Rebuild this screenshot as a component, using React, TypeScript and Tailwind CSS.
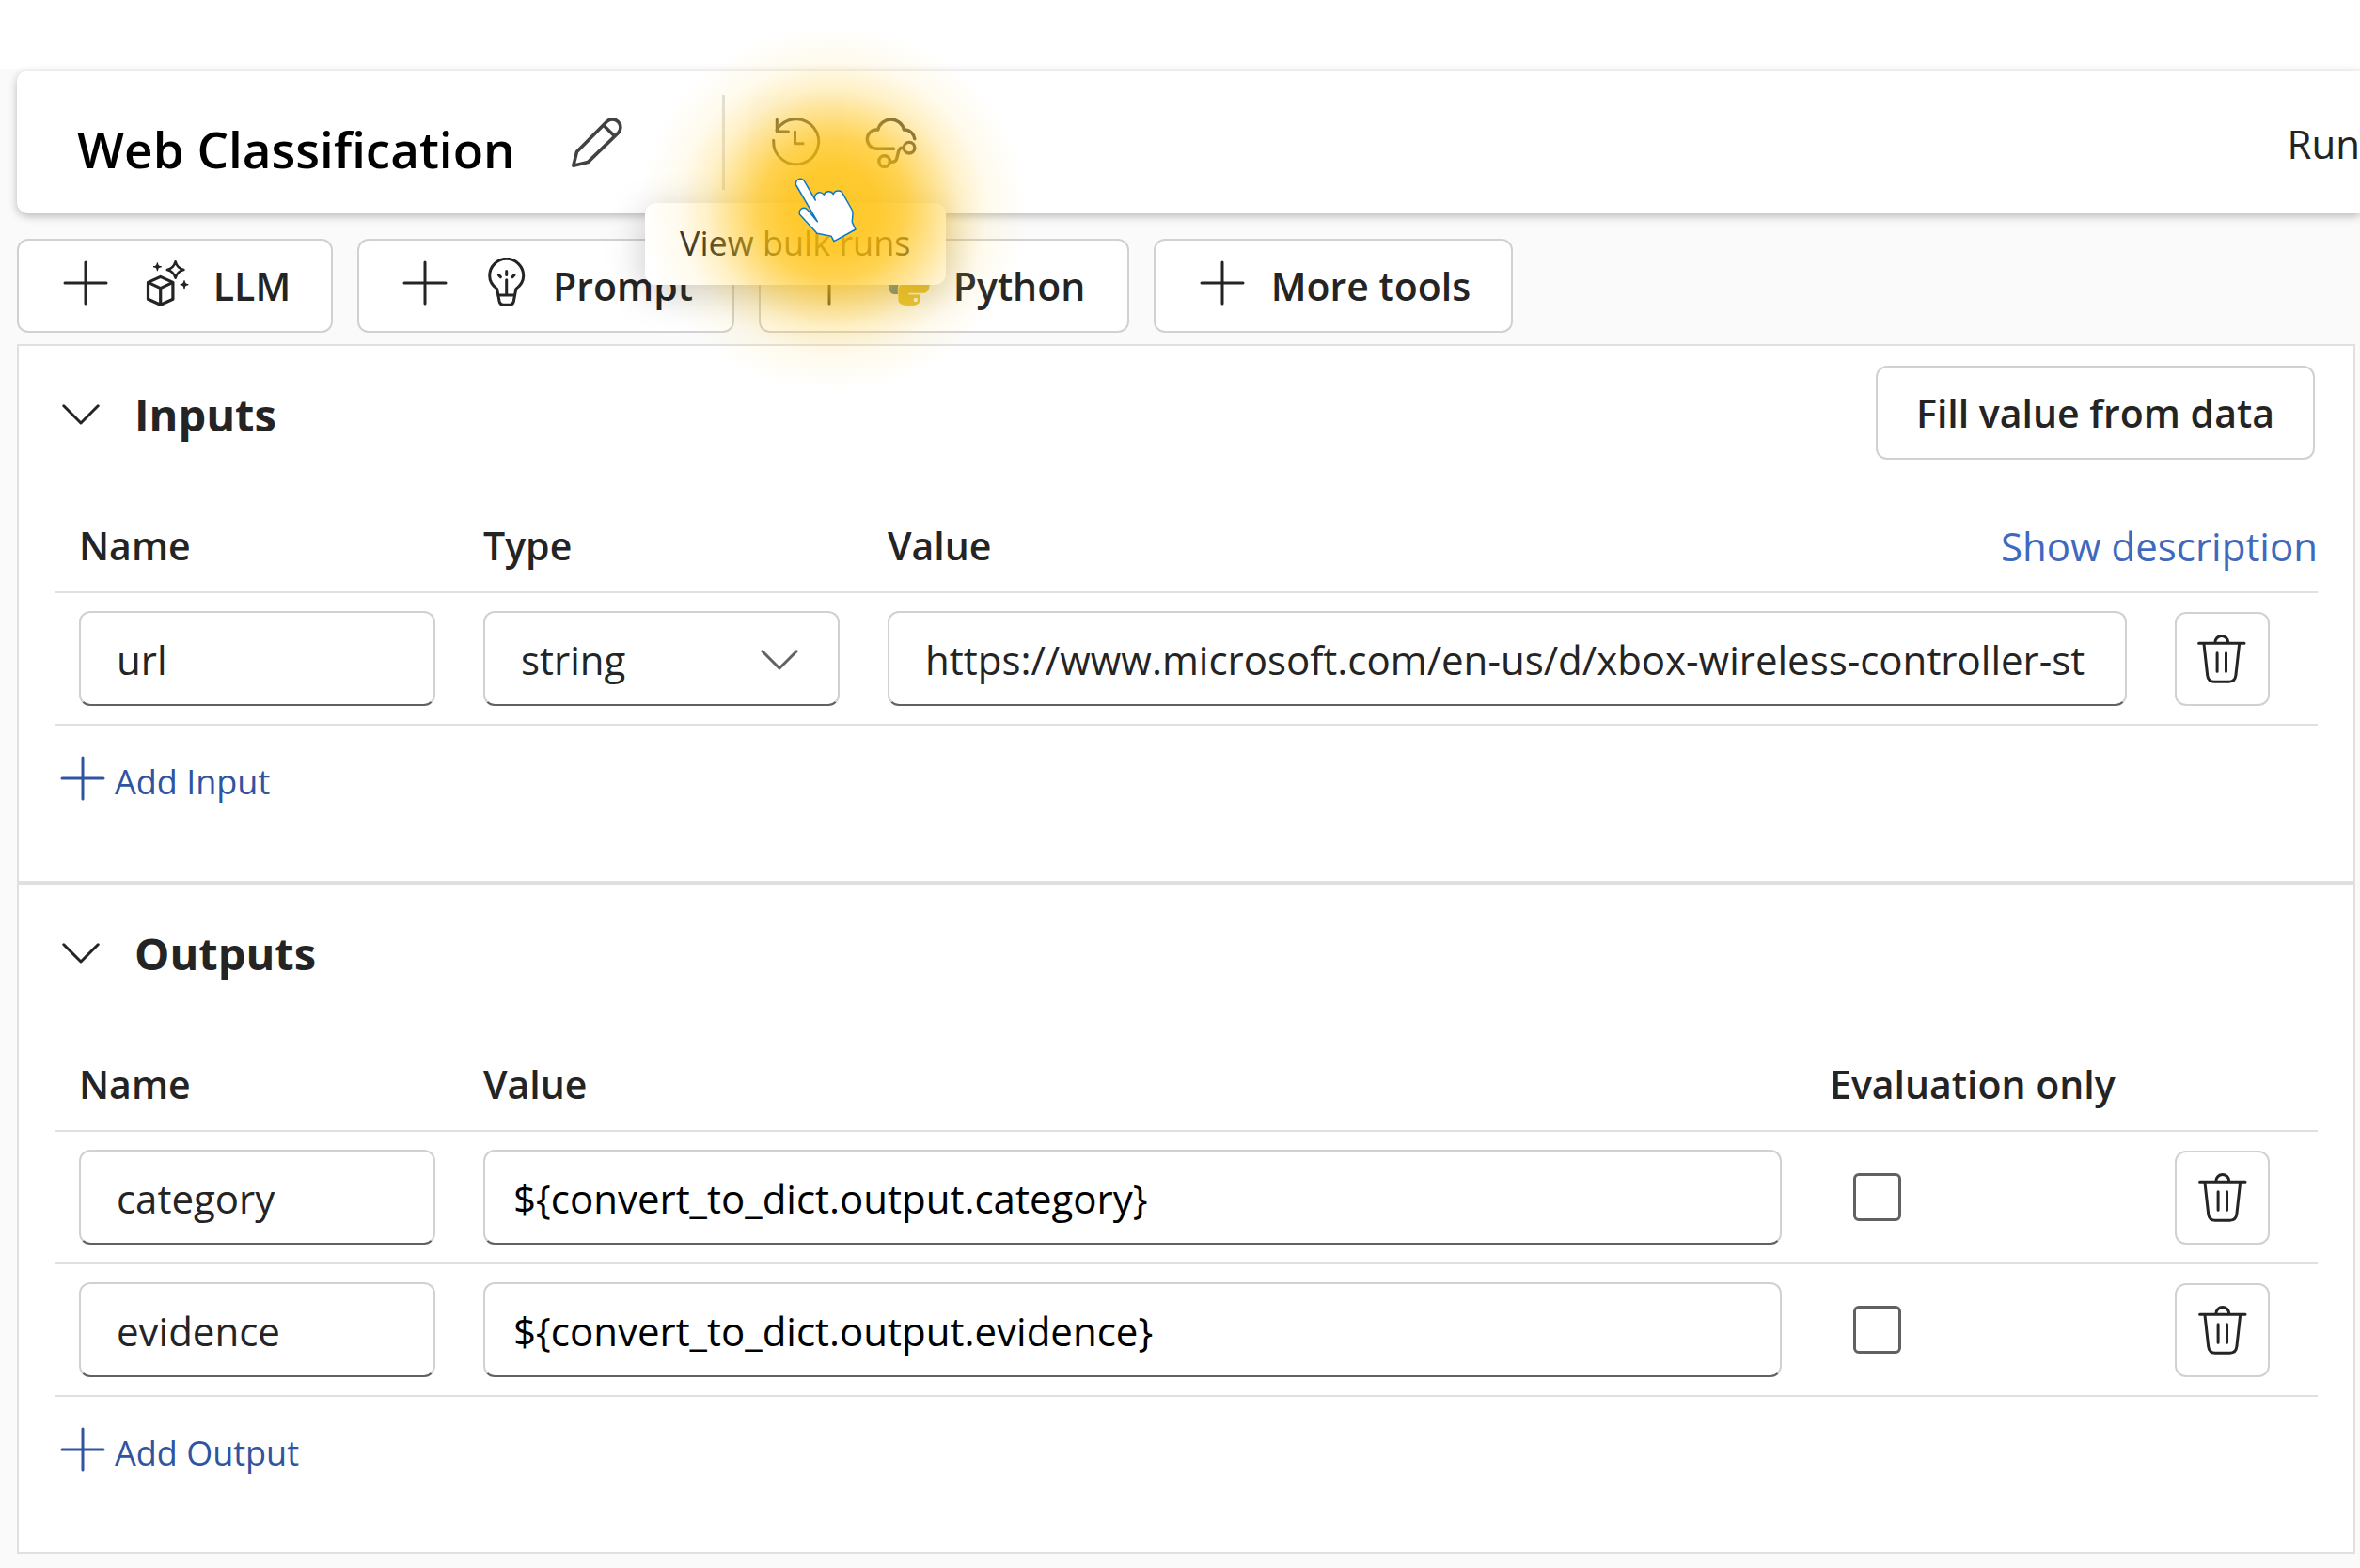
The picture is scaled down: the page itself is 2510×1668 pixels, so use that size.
import type { ReactNode } from "react";

const INK = "#242424";

function PlusIcon() {
  return (
    <svg width="48" height="48" viewBox="0 0 48 48" fill="none" stroke="currentColor" strokeWidth="3" strokeLinecap="round" aria-hidden="true">
      <path d="M24 2v44M2 24h44" />
    </svg>
  );
}

function PencilIcon() {
  return (
    <svg width="56" height="56" viewBox="0 0 56 56" fill="none" stroke="#424242" strokeWidth="3.6" strokeLinejoin="round" aria-hidden="true">
      <path d="M2.8 52.2 6.5 37.6 38.2 5.4a8.6 8.6 0 0 1 12.2 12.2L18.2 48.6Z" />
      <path d="m34.6 9 12.2 12" />
    </svg>
  );
}

function HistoryIcon() {
  return (
    <svg width="56" height="56" viewBox="0 0 56 56" fill="none" stroke="#424242" strokeWidth="3" strokeLinecap="round" strokeLinejoin="round" aria-hidden="true">
      <path d="M3.7 25.3A24 24 0 1 0 7 14.5" />
      <path d="M7.3 3.2V16h12.2" />
      <path d="M26.5 16v12.7h8.6" />
    </svg>
  );
}

function CloudFlowIcon() {
  return (
    <svg width="60" height="60" viewBox="0 0 60 60" fill="none" stroke="#424242" strokeWidth="3.4" strokeLinecap="round" strokeLinejoin="round" aria-hidden="true">
      <path d="M33.6 36.2H15.4a10.1 10.1 0 0 1 0-20.2h1.4a14.2 14.2 0 0 1 27.6 0h1.4c5 .4 9.2 4.4 10 9.8" />
      <circle cx="50" cy="35.2" r="5.8" />
      <circle cx="23.6" cy="49.6" r="5.8" />
      <path d="M44.2 35.2h-1.4c-2.6 0-3.6 1.4-4.2 4l-1.8 7.2c-.7 2.6-1.8 3.8-4.2 3.8h-3" />
    </svg>
  );
}

function CubeSparkleIcon() {
  return (
    <svg width="50" height="54" viewBox="0 0 50 54" fill="none" stroke="currentColor" strokeWidth="3.2" strokeLinejoin="round" aria-hidden="true">
      <path d="m17.7 20.4 13.2 6v17.8l-13.2 6-13.2-6V26.4Z" />
      <path d="m4.5 26.4 13.2 6.2 13.2-6.2M17.7 32.6v17.6" />
      <path strokeWidth="2.6" d="M33.6 4.2c1.2 4.8 3.8 7.6 8.8 8.8-5 1.2-7.6 4-8.8 8.8-1.2-4.8-3.8-7.6-8.8-8.8 5-1.2 7.6-4 8.8-8.8Z" />
      <path fill="currentColor" stroke="none" d="M14.4 5.2q.8 3.8 4.6 4.6-3.8.8-4.6 4.6-.8-3.8-4.6-4.6 3.8-.8 4.6-4.6ZM43 24.1q.8 3.8 4.6 4.6-3.8.8-4.6 4.6-.8-3.8-4.6-4.6 3.8-.8 4.6-4.6Z" />
      <path strokeWidth="1.4" strokeLinecap="round" d="M14.4 6v7.6M10.6 9.8h7.6M43 24.9v7.6M39.2 28.7h7.6" />
    </svg>
  );
}

function BulbIcon() {
  return (
    <svg width="50" height="54" viewBox="0 0 50 54" fill="none" stroke="currentColor" strokeWidth="3" strokeLinecap="round" strokeLinejoin="round" aria-hidden="true">
      <path d="M14.6 33.4C9.400 29.600 6.700 24.600 6.700 19.300a18 18 0 0 1 36 0c0 5.300-2.700 10.300-7.900 14.100L32.300 46.600c-.5 2.300-1.800 3.600-4 3.600h-7.200c-2.200 0-3.500-1.300-4-3.600Z" />
      <path d="M16 39.900h17.400M24.700 23.800v15.600M24.700 14.500v4M16.400 18.600l2 2M33 18.600l-2 2" />
    </svg>
  );
}

function PythonIcon() {
  return (
    <svg width="46" height="50" viewBox="0 0 46 50" aria-hidden="true">
      <path fill="#3c77a9" fillRule="evenodd" d="M22 1C14 1 11.300 3 11.300 7v5.500h12v1.800H7C3 14.300.8 18.500.8 25.500S3 37 7 37h3.800v-6.200c0-4 3-7 7-7h10.800c3.200 0 5.600-2.600 5.600-5.800V7c0-4-4.200-6-12.200-6Zm-6.200 3.800a2.200 2.200 0 1 1 0 4.400 2.200 2.200 0 0 1 0-4.400Z" />
      <path fill="#e8c52e" fillRule="evenodd" transform="rotate(180 22.800 25)" d="M22 1C14 1 11.300 3 11.300 7v5.500h12v1.800H7C3 14.300.8 18.500.8 25.500S3 37 7 37h3.800v-6.200c0-4 3-7 7-7h10.800c3.200 0 5.600-2.600 5.600-5.800V7c0-4-4.200-6-12.200-6Zm-6.200 3.800a2.200 2.200 0 1 1 0 4.400 2.200 2.200 0 0 1 0-4.400Z" />
    </svg>
  );
}

function TrashIcon() {
  return (
    <svg width="52" height="56" viewBox="0 0 52 56" fill="none" stroke={INK} strokeWidth="3" strokeLinecap="round" strokeLinejoin="round" aria-hidden="true">
      <path d="M1.600 11.200h48.400M18.800 10.600a7 7 0 0 1 14 0" />
      <path d="M7 12.200l3.700 33.200c.5 4.400 3.200 6.800 7.300 6.800h15.600c4.100 0 6.800-2.400 7.300-6.800l3.700-33.200" />
      <path d="M21.100 21.800v19.400M30.500 21.800v19.400" />
    </svg>
  );
}

function ChevronIcon({ color = INK }: { color?: string }) {
  return (
    <svg width="40" height="22" viewBox="0 0 40 22" fill="none" stroke={color} strokeWidth="3" strokeLinecap="round" strokeLinejoin="round" aria-hidden="true">
      <path d="m1.800 1.800 18.200 18.200 18.200-18.200" />
    </svg>
  );
}

function HandPointer() {
  return (
    <svg width="68" height="70" viewBox="0 0 68 70" fill="#fff" stroke="#0a78c4" strokeWidth="1.500" strokeLinejoin="round" aria-hidden="true">
      <path d="M2 8.500A4.700 4.700 0 0 1 10.600 3.800L22.300 24a4.500 4.500 0 0 1 9-5.800 5.500 5.500 0 0 1 10-.6 5.500 5.500 0 0 1 10.400.1l9.600 16.800c1.800 4.500-.3 8.500.1 13.200L65 55 42 67.700l-3-5.500-15-3L5.800 39.600a4.600 4.600 0 0 1 8.500-4.900l10 12Z" />
    </svg>
  );
}

function ToolButton({ icon, label, width }: { icon?: ReactNode; label: string; width: string }) {
  return (
    <button className={`flex h-[100px] items-center justify-center rounded-xl border-2 border-[#d1d1d1] bg-white pl-1 text-[41px] font-semibold ${width}`}>
      <span className="pb-1.5">
        <PlusIcon />
      </span>
      {icon && <span className="ml-[38px] pb-1.5">{icon}</span>}
      <span className={icon ? "ml-6 pt-0.5" : "ml-7 pt-0.5"}>{label}</span>
    </button>
  );
}

const field =
  "block h-[101px] w-full rounded-xl border-2 border-[#d1d1d1] border-b-[#616161] bg-white pt-0.5 text-[42px]";
const cell = "border-b-2 border-[#e0e0e0] pt-[19px] pr-[25px] pb-[19px] pl-[26px]";
const head = "h-[102px] border-b-2 border-[#e0e0e0] pt-1 pl-[26px] text-left text-[41px] font-semibold";

function DeleteButton({ name }: { name: string }) {
  return (
    <button aria-label={`Delete ${name}`} className="flex h-[100px] w-[101px] items-center justify-center rounded-xl border-2 border-[#d1d1d1] bg-white">
      <TrashIcon />
    </button>
  );
}

function SectionHeading({ title, children }: { title: string; children?: ReactNode }) {
  return (
    <div className="mb-10 flex h-[100px] items-center">
      <button aria-label={`Collapse ${title}`} className="ml-2 pt-1">
        <ChevronIcon />
      </button>
      <h2 className="ml-[37px] pt-1 text-[47px] font-bold">{title}</h2>
      {children}
    </div>
  );
}

function AddButton({ label }: { label: string }) {
  return (
    <button className="mt-8 ml-1.5 flex h-12 items-center gap-2.5 text-[36px] text-[#30549f]">
      <PlusIcon />
      <span className="pt-2">{label}</span>
    </button>
  );
}

const outputs = [
  { name: "category", value: "${convert_to_dict.output.category}" },
  { name: "evidence", value: "${convert_to_dict.output.evidence}" },
];

export default function App() {
  return (
    <div className="min-h-screen overflow-hidden bg-[#fafafa] font-['Open_Sans','Noto_Sans',sans-serif] text-[#242424]">
      <div className="h-[73px] bg-white" />

      <header className="relative z-10 mt-0.5 ml-[18px] flex h-[152px] items-center rounded-l-xl bg-white pl-16 shadow-[0_3px_10px_rgba(0,0,0,0.26)]">
        <h1 className="pt-4 text-[53px] font-semibold whitespace-nowrap text-black">Web Classification</h1>
        <button aria-label="Rename flow" className="ml-[37px] flex size-[100px] items-center justify-center pt-0.5">
          <PencilIcon />
        </button>
        <div className="mr-[26px] ml-[83px] h-[101px] w-[3px] bg-[#e0e0e0]" />
        <div className="relative">
          <button aria-label="View bulk runs" className="flex size-[100px] items-center justify-center rounded-xl bg-[#fdfdfd] pt-0.5">
            <HistoryIcon />
          </button>
          <div role="tooltip" className="absolute top-[115px] -left-[111px] flex h-[87px] w-[320px] items-center justify-center rounded-xl bg-white pb-0.5 text-[36px] whitespace-nowrap shadow-[0_8px_40px_rgba(0,0,0,0.22)]">
            View bulk runs
          </div>
          <div className="pointer-events-none absolute -top-[74px] -left-[116px] h-[390px] w-[410px] bg-[radial-gradient(closest-side,rgba(255,192,8,0.86)_0%,rgba(255,192,8,0.84)_22%,rgba(255,194,16,0.73)_38%,rgba(255,197,28,0.52)_51%,rgba(255,202,50,0.28)_65%,rgba(255,210,80,0.1)_80%,rgba(255,220,120,0)_100%)]" />
          <div className="pointer-events-none absolute top-[88px] left-12">
            <HandPointer />
          </div>
        </div>
        <button aria-label="Cloud runs" className="flex size-[100px] items-center justify-center pt-0.5">
          <CloudFlowIcon />
        </button>
        <button className="ml-auto pt-0.5 text-[42px]">Run</button>
      </header>

      <nav aria-label="Tools" className="mt-[27px] ml-[18px] flex gap-[26px]">
        <ToolButton label="LLM" icon={<CubeSparkleIcon />} width="w-[336px]" />
        <ToolButton label="Prompt" icon={<BulbIcon />} width="w-[401px]" />
        <ToolButton label="Python" icon={<PythonIcon />} width="w-[394px]" />
        <ToolButton label="More tools" width="w-[382px]" />
      </nav>

      <main className="mt-3 mr-[5px] ml-[18px] border-2 border-[#e0e0e0] bg-white">
        <section className="border-b-4 border-[#e0e0e0] px-[38px] pt-[21px] pb-[85px]">
          <SectionHeading title="Inputs">
            <button className="mr-[3px] ml-auto h-[100px] w-[467px] rounded-xl border-2 border-[#d1d1d1] bg-white pt-0.5 text-[41px] font-semibold">
              Fill value from data
            </button>
          </SectionHeading>
          <table className="w-full table-fixed border-separate border-spacing-0">
            <colgroup>
              <col className="w-[430px]" />
              <col className="w-[430px]" />
              <col />
              <col className="w-[178px]" />
            </colgroup>
            <thead>
              <tr>
                <th className={head}>Name</th>
                <th className={head}>Type</th>
                <th colSpan={2} className={head}>
                  <div className="flex items-center justify-between">
                    Value
                    <a href="#description" className="text-[42px] leading-none font-normal text-[#3f69be]">Show description</a>
                  </div>
                </th>
              </tr>
            </thead>
            <tbody>
              <tr>
                <td className={cell}>
                  <input aria-label="Input name" defaultValue="url" className={`${field} px-[38px]`} />
                </td>
                <td className={cell}>
                  <div className="relative">
                    <select aria-label="Input type" className={`${field} appearance-none px-[38px]`}>
                      <option>string</option>
                    </select>
                    <span className="pointer-events-none absolute inset-y-0 right-11 flex items-center pt-0.5">
                      <ChevronIcon color="#616161" />
                    </span>
                  </div>
                </td>
                <td className={cell}>
                  <input aria-label="Input value" defaultValue="https://www.microsoft.com/en-us/d/xbox-wireless-controller-st" className={`${field} pr-8 pl-[38px]`} />
                </td>
                <td className={cell}>
                  <DeleteButton name="url" />
                </td>
              </tr>
            </tbody>
          </table>
          <AddButton label="Add Input" />
        </section>

        <section className="px-[38px] pt-[21px] pb-[85px]">
          <SectionHeading title="Outputs" />
          <table className="w-full table-fixed border-separate border-spacing-0">
            <colgroup>
              <col className="w-[430px]" />
              <col />
              <col className="w-[367px]" />
              <col className="w-[178px]" />
            </colgroup>
            <thead>
              <tr>
                <th className={head}>Name</th>
                <th className={head}>Value</th>
                <th className={`${head} whitespace-nowrap`}>Evaluation only</th>
                <td className={head} />
              </tr>
            </thead>
            <tbody>
              {outputs.map((o) => (
                <tr key={o.name}>
                  <td className={cell}>
                    <input aria-label="Output name" defaultValue={o.name} className={`${field} px-[38px]`} />
                  </td>
                  <td className={cell}>
                    <input aria-label={`Value of ${o.name}`} defaultValue={o.value} className={`${field} px-[30px] text-black`} />
                  </td>
                  <td className={cell}>
                    <input type="checkbox" aria-label={`Evaluation only: ${o.name}`} className="ml-[25px] block size-[51px] appearance-none rounded-md border-[3px] border-[#616161] bg-white" />
                  </td>
                  <td className={cell}>
                    <DeleteButton name={o.name} />
                  </td>
                </tr>
              ))}
            </tbody>
          </table>
          <AddButton label="Add Output" />
        </section>
      </main>
    </div>
  );
}
